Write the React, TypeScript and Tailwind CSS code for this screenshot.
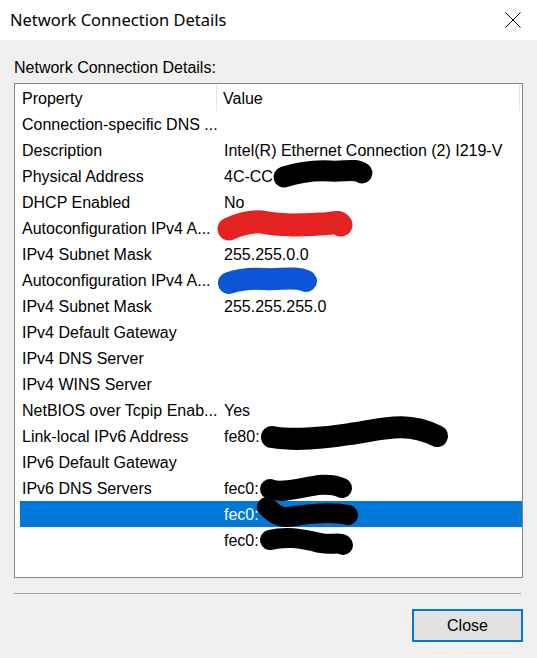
import React from 'react';

type Row = { prop: string; value: string; selected?: boolean };

const rows: Row[] = [
  { prop: 'Connection-specific DNS ...', value: '' },
  { prop: 'Description', value: 'Intel(R) Ethernet Connection (2) I219-V' },
  { prop: 'Physical Address', value: '4C-CC' },
  { prop: 'DHCP Enabled', value: 'No' },
  { prop: 'Autoconfiguration IPv4 A...', value: '' },
  { prop: 'IPv4 Subnet Mask', value: '255.255.0.0' },
  { prop: 'Autoconfiguration IPv4 A...', value: '' },
  { prop: 'IPv4 Subnet Mask', value: '255.255.255.0' },
  { prop: 'IPv4 Default Gateway', value: '' },
  { prop: 'IPv4 DNS Server', value: '' },
  { prop: 'IPv4 WINS Server', value: '' },
  { prop: 'NetBIOS over Tcpip Enab...', value: 'Yes' },
  { prop: 'Link-local IPv6 Address', value: 'fe80:' },
  { prop: 'IPv6 Default Gateway', value: '' },
  { prop: 'IPv6 DNS Servers', value: 'fec0:' },
  { prop: '', value: 'fec0:', selected: true },
  { prop: '', value: 'fec0:' },
];

// redaction scribbles, drawn in page coordinates over the list box (outer corner at 14, 83)
function Scribbles() {
  return (
    <svg className="absolute -left-px -top-px pointer-events-none" width="509" height="495" viewBox="14 83 509 495">
      <g fill="none" strokeLinecap="round" strokeLinejoin="round">
        <path d="M284 177 C300 172 312 170 330 171 C345 172 355 168 362 173" stroke="#000" strokeWidth="21" />
        <path d="M229 229 C240 224 250 221 262 222 C280 226 300 225 320 224 C332 224 338 220 341 225" stroke="#e52222" strokeWidth="23" />
        <path d="M229 283 C240 279 252 278 265 279 C280 280 295 276 306 281" stroke="#0b55d8" strokeWidth="22" />
        <path d="M272 437 C290 440 320 439 350 434 C380 430 405 420 437 436" stroke="#000" strokeWidth="22" />
        <path d="M270 489 C280 494 300 488 318 485 C330 484 338 486 342 488" stroke="#000" strokeWidth="20" />
        <path d="M267 507 C272 511 278 520 295 516 C315 513 335 512 348 515" stroke="#000" strokeWidth="20" />
        <path d="M270 540 C285 536 300 538 320 543 C332 545 340 542 343 545" stroke="#000" strokeWidth="20" />
      </g>
    </svg>
  );
}

export default function App() {
  return (
    <div className="w-[537px] h-[658px] bg-[#f0f0f0] font-['Liberation_Sans',Arial,sans-serif] text-black overflow-hidden">
      <div className="h-[40px] bg-white flex items-center justify-between pl-[10px] pr-[16px]">
        <span className="font-['Noto_Sans',sans-serif] text-[16.5px] leading-none">Network Connection Details</span>
        <svg width="16" height="16" viewBox="0 0 16 16">
          <path d="M0.5 0.5 L15.5 15.5 M15.5 0.5 L0.5 15.5" stroke="#000" strokeWidth="1" />
        </svg>
      </div>

      <div className="px-[14px] pt-[19px]">
        <div className="text-[16px] leading-[18px] h-[18px]">Network Connection Details:</div>

        <div className="relative mt-[6px] h-[495px] w-[509px] bg-white border border-[#828790] pt-[1px]">
          <div className="flex h-[26px] items-center text-[16px]">
            <div className="w-[202px] h-full flex items-center pl-[7px] pt-[2px] border-r border-[#e5e5e5]">Property</div>
            <div className="w-[303px] h-full flex items-center pl-[6px] pt-[2px] border-r border-[#e5e5e5]">Value</div>
          </div>
          {rows.map((r, i) => (
            <div
              key={i}
              className={`ml-[5px] flex h-[26px] items-center pt-[2px] text-[16px] whitespace-nowrap ${r.selected ? 'bg-[#0078d7] text-white' : ''}`}
            >
              <div className="w-[197px] pl-[2px]">{r.prop}</div>
              <div className="pl-[7px]">{r.value}</div>
            </div>
          ))}
          <Scribbles />
        </div>

        <div className="mt-[15px] h-px w-[507px] bg-[#a0a0a0]" />

        <div className="flex justify-end mt-[15px]">
          <button className="w-[111px] h-[33px] bg-[#e1e1e1] border-2 border-[#0078d7] text-[16px] leading-none">Close</button>
        </div>
      </div>
    </div>
  );
}
